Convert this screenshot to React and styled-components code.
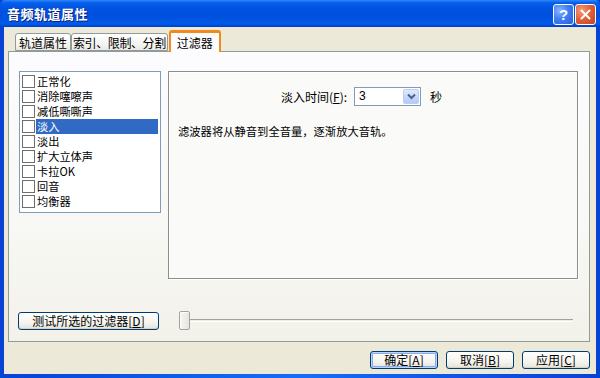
import React from "react";
import styled, { createGlobalStyle } from "styled-components";

const Global = createGlobalStyle`
  html, body { margin: 0; padding: 0; background: #fff; }
  body { font-family: "Noto Sans CJK SC", "Noto Sans", sans-serif; font-size: 12px; color: #000; }
  * { box-sizing: border-box; }
`;

const Window = styled.div`
  width: 600px;
  height: 378px;
  display: flex;
  flex-direction: column;
  background: #0842d5;
  overflow: hidden;
`;

const TitleBar = styled.div`
  height: 27px;
  flex: none;
  display: flex;
  align-items: center;
  justify-content: space-between;
  padding: 0 4px 0 7px;
  background: linear-gradient(
    #2f86ff 0%,
    #0760ea 10%,
    #0052e0 30%,
    #0050dd 60%,
    #015be8 85%,
    #0053e3 92%,
    #003bc8 100%
  );
  border-radius: 5px 5px 0 0;
`;

const Title = styled.div`
  color: #fff;
  font-weight: bold;
  font-size: 13px;
  letter-spacing: 0.5px;
  text-shadow: 1px 1px 0 #0a1e7a;
`;

const Controls = styled.div`
  display: flex;
  gap: 1px;
  margin-top: 1px;
`;

const CapButton = styled.div`
  width: 21px;
  height: 21px;
  border: 1px solid #fff;
  border-radius: 3px;
  display: flex;
  align-items: center;
  justify-content: center;
  color: #fff;
  font-family: "Liberation Sans", Arial, sans-serif;
  font-weight: bold;
  font-size: 15px;
  background: ${(p) =>
    p.$close
      ? "radial-gradient(circle at 30% 30%, #f3a07a 0%, #e2623a 45%, #c8401c 100%)"
      : "radial-gradient(circle at 30% 30%, #8ab4ff 0%, #3f7ff5 45%, #2a5fd9 100%)"};
`;

const Frame = styled.div`
  flex: 1;
  display: flex;
  padding: 0 4px 4px 4px;
  background: linear-gradient(90deg, #0842d5, #166cf8 50%, #0842d5);
`;

const Body = styled.div`
  flex: 1;
  background: #ece9d8;
  padding: 4px 6px 0 4px;
  display: flex;
  flex-direction: column;
`;

const TabStrip = styled.div`
  height: 20px;
  display: flex;
  align-items: flex-end;
  padding-left: 7px;
  position: relative;
  z-index: 1;
`;

const Tab = styled.div`
  height: ${(p) => (p.$active ? "22px" : "18px")};
  margin-bottom: ${(p) => (p.$active ? "-1px" : "0")};
  margin-left: ${(p) => (p.$active ? "1px" : "0")};
  padding: 0 ${(p) => p.$pad}px;
  display: flex;
  align-items: center;
  white-space: nowrap;
  letter-spacing: ${(p) => p.$ls || 0}px;
  border: 1px solid #919b9c;
  border-bottom: ${(p) => (p.$active ? "none" : "1px solid #919b9c")};
  border-radius: 3px 3px 0 0;
  background: ${(p) =>
    p.$active ? "#fcfcfe" : "linear-gradient(#ffffff, #f3f3ef 70%, #e8e7e0)"};
  ${(p) =>
    p.$active &&
    `
    border: 2px solid #f08a1c;
    border-bottom: none;
    border-top: 3px solid #f08a1c;
  `}
`;

const TabPage = styled.div`
  height: 291px;
  border: 1px solid #919b9c;
  background: linear-gradient(#fcfcfe, #f8f8f4 60%, #f2f1ea);
  padding: 19px 10px 0 10px;
  display: flex;
  flex-direction: column;
`;

const TopRow = styled.div`
  display: flex;
  align-items: flex-start;
  gap: 7px;
`;

const ListBox = styled.div`
  width: 142px;
  height: 142px;
  border: 1px solid #7f9db9;
  background: #fff;
  padding: 2px 2px 0 2px;
  display: flex;
  flex-direction: column;
  font-size: 11.2px;
`;

const ListItem = styled.div`
  height: 15px;
  flex: none;
  display: flex;
  align-items: center;
  gap: 1px;
  line-height: 15px;
`;

const Check = styled.span`
  width: 13px;
  height: 13px;
  flex: none;
  border: 1px solid #6e6e6e;
  background: #fff;
`;

const ItemLabel = styled.span`
  flex: 1;
  height: 15px;
  line-height: 15px;
  padding-left: 1px;
  background: ${(p) => (p.$selected ? "#316ac5" : "transparent")};
  color: ${(p) => (p.$selected ? "#fff" : "#000")};
`;

const GroupPanel = styled.div`
  width: 410px;
  height: 208px;
  border: 1px solid #8c8c8c;
  box-shadow: 1px 1px 0 #fff, inset 1px 1px 0 #fff;
  background: #fafaf8;
  padding: 15px 9px 0 9px;
  display: flex;
  flex-direction: column;
`;

const FieldRow = styled.div`
  display: flex;
  align-items: center;
  padding-left: 103px;
  height: 19px;
`;

const FieldLabel = styled.span`
  margin-right: 7px;
  u { text-decoration: underline; }
`;

const Combo = styled.div`
  width: 67px;
  height: 19px;
  border: 1px solid #7f9db9;
  background: #fff;
  display: flex;
  align-items: stretch;
  padding: 1px;
`;

const ComboValue = styled.span`
  flex: 1;
  padding-left: 3px;
  line-height: 15px;
  font-family: "Liberation Sans", Arial, sans-serif;
  font-size: 12px;
`;

const ComboArrow = styled.span`
  width: 16px;
  border: 1px solid #b9cdf6;
  border-radius: 2px;
  background: linear-gradient(#e0eafd, #c3d5fb 60%, #b2c8f8);
  display: flex;
  align-items: center;
  justify-content: center;
`;

const Unit = styled.span`
  margin-left: 9px;
`;

const Description = styled.div`
  margin-top: 17px;
  font-size: 11.3px;
`;

const TestRow = styled.div`
  margin-top: 32px;
  display: flex;
  align-items: center;
  gap: 20px;
  margin-left: -1px;
`;

const Button = styled.div`
  width: ${(p) => p.$w || 68}px;
  height: 18px;
  border: 1px solid #003c74;
  border-radius: 3px;
  background: linear-gradient(#ffffff, #f5f4ef 60%, #e3e2da);
  display: flex;
  align-items: center;
  justify-content: center;
  white-space: nowrap;
  line-height: 14px;
  box-shadow: ${(p) =>
    p.$default
      ? "inset 0 0 0 1px #bcd3f7, inset 0 0 0 2px #89adec"
      : "inset 0 -1px 0 #d6d0c5"};
  u { text-decoration: underline; }
`;

const Slider = styled.div`
  width: 394px;
  height: 19px;
  position: relative;
  display: flex;
  align-items: center;
`;

const Track = styled.div`
  width: 100%;
  height: 3px;
  border-top: 1px solid #a4a39b;
  border-bottom: 1px solid #ffffff;
  background: #ecebe4;
`;

const Thumb = styled.div`
  position: absolute;
  left: 0;
  top: 0;
  width: 11px;
  height: 19px;
  border: 1px solid #a3a39b;
  border-radius: 2px;
  background: linear-gradient(90deg, #f7f7f4, #e6e5de);
  box-shadow: inset 1px 1px 0 #fff;
`;

const ButtonRow = styled.div`
  margin-top: 9px;
  display: flex;
  justify-content: flex-end;
  gap: 8px;
`;

const items = [
  "正常化",
  "消除噻嚓声",
  "减低嘶嘶声",
  "淡入",
  "淡出",
  "扩大立体声",
  "卡拉OK",
  "回音",
  "均衡器",
];

export default function App() {
  return (
    <>
      <Global />
      <Window>
        <TitleBar>
          <Title>音频轨道属性</Title>
          <Controls>
            <CapButton>?</CapButton>
            <CapButton $close>
              <svg width="11" height="11" viewBox="0 0 11 11">
                <path d="M1.5 1.5 L9.5 9.5 M9.5 1.5 L1.5 9.5" stroke="#fff" strokeWidth="2" strokeLinecap="round" />
              </svg>
            </CapButton>
          </Controls>
        </TitleBar>
        <Frame>
          <Body>
            <TabStrip>
              <Tab $pad={3}>轨道属性</Tab>
              <Tab $pad={1} $ls={-0.4}>索引、限制、分割</Tab>
              <Tab $active $pad={6}>过滤器</Tab>
            </TabStrip>
            <TabPage>
              <TopRow>
                <ListBox>
                  {items.map((t, i) => (
                    <ListItem key={t}>
                      <Check />
                      <ItemLabel $selected={i === 3}>{t}</ItemLabel>
                    </ListItem>
                  ))}
                </ListBox>
                <GroupPanel>
                  <FieldRow>
                    <FieldLabel>
                      淡入时间(<u>F</u>):
                    </FieldLabel>
                    <Combo>
                      <ComboValue>3</ComboValue>
                      <ComboArrow>
                        <svg width="9" height="7" viewBox="0 0 9 7">
                          <path d="M1 1.5 L4.5 5 L8 1.5" fill="none" stroke="#4d6185" strokeWidth="2" />
                        </svg>
                      </ComboArrow>
                    </Combo>
                    <Unit>秒</Unit>
                  </FieldRow>
                  <Description>滤波器将从静音到全音量，逐渐放大音轨。</Description>
                </GroupPanel>
              </TopRow>
              <TestRow>
                <Button $w={141}>
                  测试所选的过滤器[<u>D</u>]
                </Button>
                <Slider>
                  <Track />
                  <Thumb />
                </Slider>
              </TestRow>
            </TabPage>
            <ButtonRow>
              <Button $default>
                确定[<u>A</u>]
              </Button>
              <Button>
                取消[<u>B</u>]
              </Button>
              <Button>
                应用[<u>C</u>]
              </Button>
            </ButtonRow>
          </Body>
        </Frame>
      </Window>
    </>
  );
}
